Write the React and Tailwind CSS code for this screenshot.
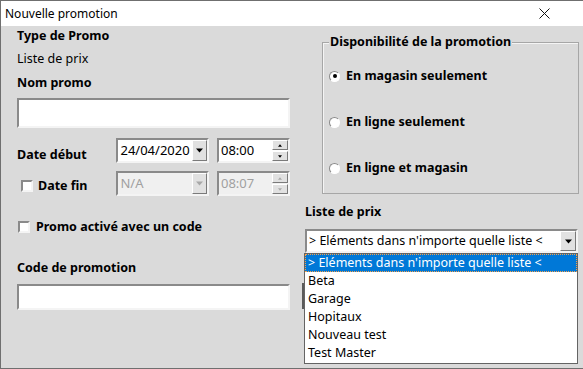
import React from "react";

const sunken = "border-2 border-t-[#8a8a8a] border-l-[#8a8a8a] border-b-[#f4f4f4] border-r-[#f4f4f4]";
const raised = "border border-t-white border-l-white border-b-[#7a7a7a] border-r-[#7a7a7a] bg-[#e1e1e1]";

function Arrow({ dir = "down", disabled, size = 7 }) {
  const c = disabled ? "#a8a8a8" : "#000";
  return (
    <svg width={size} height={Math.ceil(size / 2) + 1} viewBox="0 0 7 4">
      {dir === "down" ? <polygon points="0,0 7,0 3.5,4" fill={c} /> : <polygon points="0,4 7,4 3.5,0" fill={c} />}
    </svg>
  );
}

function DateCombo({ value, disabled }) {
  return (
    <div className={`${sunken} w-[93px] h-[25px] flex items-center ${disabled ? "bg-[#f0f0f0]" : "bg-white"}`}>
      <span className={`flex-1 pl-[2px] text-[13px] ${disabled ? "text-[#a0a0a0]" : "text-black"}`}>{value}</span>
      <div className={`${raised} w-[15px] h-full flex items-center justify-center`}>
        <Arrow disabled={disabled} />
      </div>
    </div>
  );
}

function TimeSpin({ value, disabled }) {
  return (
    <div className={`${sunken} w-[73px] h-[25px] flex items-center ${disabled ? "bg-[#f0f0f0]" : "bg-white"}`}>
      <span className={`flex-1 pl-[2px] text-[13px] ${disabled ? "text-[#a0a0a0]" : "text-black"}`}>{value}</span>
      <div className="w-[16px] h-full flex flex-col gap-[1px]">
        <div className={`${raised} flex-1 flex items-center justify-center`}>
          <Arrow dir="up" size={4} disabled={disabled} />
        </div>
        <div className={`${raised} flex-1 flex items-center justify-center`}>
          <Arrow size={4} disabled={disabled} />
        </div>
      </div>
    </div>
  );
}

function Checkbox() {
  return <div className={`${sunken} w-[12px] h-[12px] bg-white shrink-0`} />;
}

function Radio({ checked }) {
  return (
    <div className="w-[11px] h-[11px] rounded-full border border-t-[#8a8a8a] border-l-[#8a8a8a] border-b-white border-r-white bg-white flex items-center justify-center shrink-0">
      {checked && <div className="w-[4px] h-[4px] rounded-full bg-black" />}
    </div>
  );
}

export default function App() {
  const items = ["Beta", "Garage", "Hopitaux", "Nouveau test", "Test Master"];
  return (
    <div className="w-[583px] h-[369px] flex flex-col border-t border-l border-b border-[#6f6f6f] font-['Noto_Sans',sans-serif] text-black overflow-hidden">
      <div className="h-[25px] bg-white flex items-center justify-between pl-[4px] pr-[33px] shrink-0">
        <span className="text-[12px]">Nouvelle promotion</span>
        <svg width="11" height="11" viewBox="0 0 11 11">
          <path d="M0.5 0.5 L10.5 10.5 M10.5 0.5 L0.5 10.5" stroke="#111" strokeWidth="1" />
        </svg>
      </div>

      <div className="flex-1 bg-[#dadada] flex relative">
        {/* left column */}
        <div className="w-[289px] pl-[16px] flex flex-col">
          <div className="h-[18px] mt-[1px] flex items-center text-[12.5px] font-bold">Type de Promo</div>
          <div className="h-[18px] mt-[5px] flex items-center text-[12.5px]">Liste de prix</div>
          <div className="h-[18px] mt-[6px] flex items-center text-[12.5px] font-bold">Nom promo</div>
          <div className={`${sunken} mt-[6px] h-[30px] bg-white w-[273px]`} />

          <div className="mt-[10px] flex items-start">
            <div className="w-[100px] h-[18px] mt-[8px] flex items-center text-[12.5px] font-bold">Date début</div>
            <DateCombo value="24/04/2020" />
            <div className="ml-[8px]">
              <TimeSpin value="08:00" />
            </div>
          </div>

          <div className="mt-[7px] flex items-start">
            <div className="w-[100px] mt-[6px] pl-[4px] flex items-center gap-[5px]">
              <Checkbox />
              <span className="text-[12.5px] font-bold leading-[18px]">Date fin</span>
            </div>
            <DateCombo value="N/A" disabled />
            <div className="ml-[8px]">
              <TimeSpin value="08:07" disabled />
            </div>
          </div>

          <div className="mt-[22px] flex items-center gap-[6px] pl-[1px]">
            <Checkbox />
            <span className="text-[12.5px] font-bold leading-[18px]">Promo activé avec un code</span>
          </div>

          <div className="h-[18px] mt-[23px] flex items-center text-[12.5px] font-bold">Code de promotion</div>
          <div className={`${sunken} mt-[7px] h-[26px] bg-white w-[273px]`} />
        </div>

        {/* right column */}
        <div className="flex-1 pl-[15px] flex flex-col">
          <div className="relative mt-[16px] ml-[17px] w-[257px] h-[152px] border border-[#a6a6a6] shadow-[inset_1px_1px_0_#f4f4f4] flex flex-col pl-[6px]">
            <span className="absolute -top-[10px] left-[6px] px-[1px] bg-[#dadada] text-[12.5px] font-bold leading-[18px]">
              Disponibilité de la promotion
            </span>
            <div className="mt-[24px] flex items-center gap-[6px]">
              <Radio checked />
              <span className="text-[12.5px] font-bold leading-[18px]">En magasin seulement</span>
            </div>
            <div className="mt-[28px] flex items-center gap-[6px]">
              <Radio />
              <span className="text-[12.5px] font-bold leading-[18px]">En ligne seulement</span>
            </div>
            <div className="mt-[28px] flex items-center gap-[6px]">
              <Radio />
              <span className="text-[12.5px] font-bold leading-[18px]">En ligne et magasin</span>
            </div>
          </div>

          <div className="h-[18px] mt-[9px] flex items-center text-[12.5px] font-bold">Liste de prix</div>
          <div className={`${sunken} mt-[8px] h-[24px] w-[273px] bg-white flex items-center`}>
            <span className="flex-1 pl-[2px] text-[12.5px] whitespace-nowrap">&gt; Eléments dans n'importe quelle liste &lt;</span>
            <div className={`${raised} w-[16px] h-full flex items-center justify-center`}>
              <Arrow />
            </div>
          </div>
        </div>

        {/* control partly hidden behind the list */}
        <div className="absolute left-[301px] top-[257px] w-[4px] h-[26px] bg-[#5a5a5a]" />

        {/* open dropdown list */}
        <div className="absolute left-[303px] top-[227px] w-[274px] h-[111px] bg-white border border-[#646464] flex flex-col">
          <div className="h-[18px] bg-[#0078d7] text-white text-[12.5px] leading-[16px] pl-[2px] border border-dotted border-[#f7a14a] whitespace-nowrap">
            &gt; Eléments dans n'importe quelle liste &lt;
          </div>
          {items.map((it) => (
            <div key={it} className="h-[18px] text-[12.5px] leading-[18px] pl-[3px]">
              {it}
            </div>
          ))}
        </div>
      </div>
    </div>
  );
}
